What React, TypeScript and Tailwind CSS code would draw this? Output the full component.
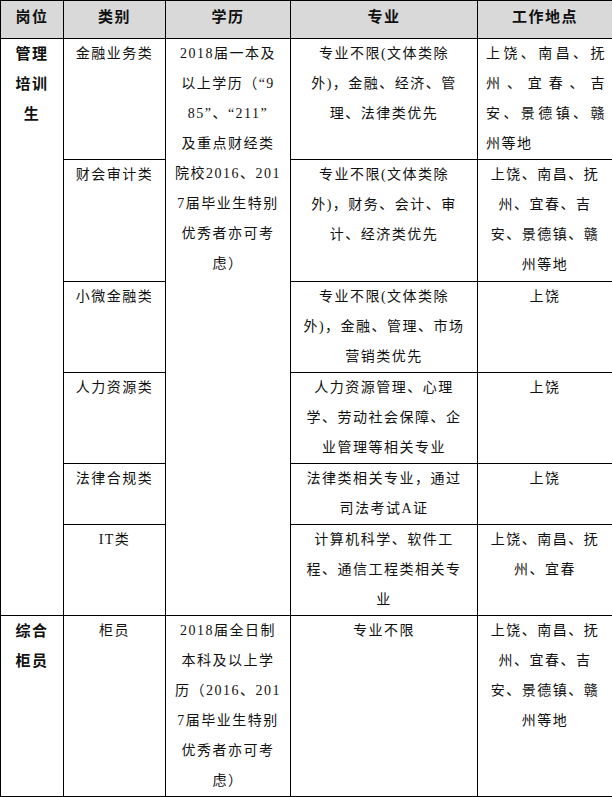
import React from "react";

type Cell = { lines: string[]; justify?: boolean };

const FONT = { fontFamily: '"Liberation Serif", "Noto Sans CJK SC", serif' };

function Lines({ lines, justify }: Cell) {
  return (
    <>
      {lines.map((l, i) => (
        <div
          key={i}
          className={
            justify && i < lines.length - 1
              ? "text-justify [text-align-last:justify]"
              : "whitespace-nowrap"
          }
        >
          {l}
        </div>
      ))}
    </>
  );
}

const td = "border border-black align-top p-0 text-center leading-[30px] text-[#111]";

const rows: { cat: string; major: string[]; place: Cell; h: string }[] = [
  {
    cat: "金融业务类",
    major: ["专业不限(文体类除", "外)，金融、经济、管", "理、法律类优先"],
    place: { lines: ["上饶、南昌、抚", "州、宜春、吉", "安、景德镇、赣", "州等地"], justify: true },
    h: "h-[121px]",
  },
  {
    cat: "财会审计类",
    major: ["专业不限(文体类除", "外)，财务、会计、审", "计、经济类优先"],
    place: { lines: ["上饶、南昌、抚", "州、宜春、吉", "安、景德镇、赣", "州等地"] },
    h: "h-[122px]",
  },
  {
    cat: "小微金融类",
    major: ["专业不限(文体类除", "外)，金融、管理、市场", "营销类优先"],
    place: { lines: ["上饶"] },
    h: "h-[91px]",
  },
  {
    cat: "人力资源类",
    major: ["人力资源管理、心理", "学、劳动社会保障、企", "业管理等相关专业"],
    place: { lines: ["上饶"] },
    h: "h-[91px]",
  },
  {
    cat: "法律合规类",
    major: ["法律类相关专业，通过", "司法考试A证"],
    place: { lines: ["上饶"] },
    h: "h-[61px]",
  },
  {
    cat: "IT类",
    major: ["计算机科学、软件工", "程、通信工程类相关专", "业"],
    place: { lines: ["上饶、南昌、抚", "州、宜春"] },
    h: "h-[91px]",
  },
];

export default function App() {
  return (
    <div className="bg-white w-[612px] h-[797px] text-[#111] text-[14px] tracking-[1.5px]" style={FONT}>
      <table className="w-[612px] table-fixed border-collapse">
        <colgroup>
          <col className="w-[63px]" />
          <col className="w-[102px]" />
          <col className="w-[125px]" />
          <col className="w-[187px]" />
          <col className="w-[135px]" />
        </colgroup>
        <thead>
          <tr className="h-[38px] bg-[#d9d9d9] font-bold text-[15px]">
            <th className="border border-black align-middle p-0 pb-[4px]">岗位</th>
            <th className="border border-black align-middle p-0 pb-[4px]">类别</th>
            <th className="border border-black align-middle p-0 pb-[4px]">学历</th>
            <th className="border border-black align-middle p-0 pb-[4px]">专业</th>
            <th className="border border-black align-middle p-0 pb-[4px]">工作地点</th>
          </tr>
        </thead>
        <tbody>
          {rows.map((r, i) => (
            <tr key={r.cat} className={r.h}>
              {i === 0 && (
                <td rowSpan={6} className={`${td} font-bold text-[15px]`}>
                  <Lines lines={["管理", "培训", "生"]} />
                </td>
              )}
              <td className={td}>{r.cat}</td>
              {i === 0 && (
                <td rowSpan={6} className={`${td} px-[2px]`}>
                  <Lines
                    lines={[
                      "2018届一本及",
                      "以上学历（“9",
                      "85”、“211”",
                      "及重点财经类",
                      "院校2016、201",
                      "7届毕业生特别",
                      "优秀者亦可考",
                      "虑）",
                    ]}
                  />
                </td>
              )}
              <td className={td}>
                <Lines lines={r.major} />
              </td>
              <td className={`${td} ${r.place.justify ? "pl-[8px] pr-[6px] text-left" : ""}`}>
                <Lines {...r.place} />
              </td>
            </tr>
          ))}
          <tr className="h-[181px]">
            <td className={`${td} font-bold text-[15px]`}>
              <Lines lines={["综合", "柜员"]} />
            </td>
            <td className={td}>柜员</td>
            <td className={`${td} px-[2px]`}>
              <Lines
                lines={[
                  "2018届全日制",
                  "本科及以上学",
                  "历（2016、201",
                  "7届毕业生特别",
                  "优秀者亦可考",
                  "虑）",
                ]}
              />
            </td>
            <td className={td}>专业不限</td>
            <td className={td}>
              <Lines lines={["上饶、南昌、抚", "州、宜春、吉", "安、景德镇、赣", "州等地"]} />
            </td>
          </tr>
        </tbody>
      </table>
    </div>
  );
}
